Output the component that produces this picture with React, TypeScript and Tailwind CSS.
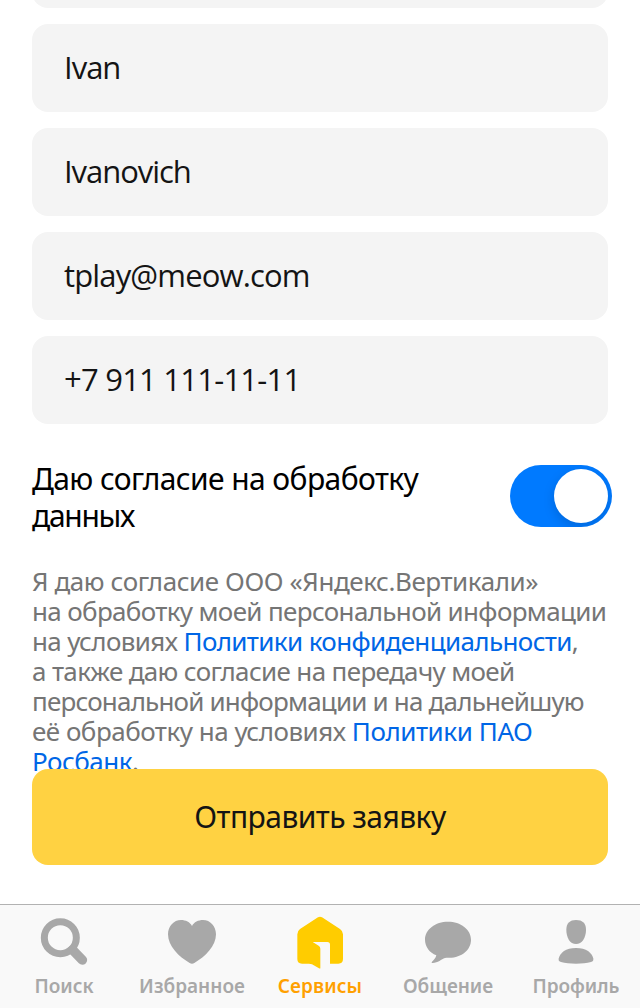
import type { ReactNode } from 'react';

const fields = [
  { value: 'Ivan', spacing: 'tracking-[-1px]' },
  { value: 'Ivanovich', spacing: 'tracking-[-1.05px]' },
  { value: 'tplay@meow.com', spacing: 'tracking-[-0.85px]' },
  { value: '+7 911 111-11-11', spacing: 'tracking-[-0.77px]' },
];

function SearchIcon() {
  return (
    <svg viewBox="0 0 180 180" className="size-[60px]" fill="none" stroke="currentColor">
      <circle cx="79" cy="83" r="48" strokeWidth="21" />
      <path d="M116 120 145 150" strokeWidth="29" strokeLinecap="round" />
    </svg>
  );
}

function HeartIcon() {
  return (
    <svg viewBox="0 0 180 180" className="size-[60px]" fill="currentColor">
      <path d="M90 48C84 36 71 30 57 30 35 30 18 49 18 73c0 35 32 67 65 86q7 4 14 0c33-19 65-51 65-86 0-24-17-43-39-43-14 0-27 6-33 18Z" />
    </svg>
  );
}

function HouseIcon() {
  return (
    <svg viewBox="0 0 180 180" className="size-[60px]" fill="#ffcc00">
      <path d="M84 22Q90 18 96 22L150 57Q159 63 159 73V147Q159 161 145 161H120V104Q120 96 112 96H68L86 107Q91 110 91 116V174Q91 177 87 175L66 163Q62 161 57 161H36Q22 161 22 147V73Q22 63 30 57Z" />
    </svg>
  );
}

function ChatIcon() {
  return (
    <svg viewBox="0 0 180 180" className="size-[60px]" fill="currentColor">
      <path d="M90 35c38 0 69 23 69 54s-29 55-67 54c-4 0-8 0-11 1-11 3-21 15-37 15-3 0-4-2-2-4 6-5 11-11 13-19C35 128 21 110 21 89c0-31 31-54 69-54Z" />
    </svg>
  );
}

function ProfileIcon() {
  return (
    <svg viewBox="0 0 180 180" className="size-[60px]" fill="currentColor">
      <path d="M90 30c20 0 30 10 30 29 0 24-12 43-30 43S61 83 61 59c0-19 10-29 29-29Z" />
      <path d="M90 114c31 0 48 14 52 32 1 6-2 8-7 10-12 4-28 5-45 5s-33-1-45-5c-5-2-8-4-7-10 4-18 21-32 52-32Z" />
    </svg>
  );
}

const tabs: { label: string; icon: ReactNode; color: string; spacing: string }[] = [
  { label: 'Поиск', icon: <SearchIcon />, color: 'text-[#a8a8a8]', spacing: 'tracking-normal' },
  { label: 'Избранное', icon: <HeartIcon />, color: 'text-[#a8a8a8]', spacing: 'tracking-normal' },
  { label: 'Сервисы', icon: <HouseIcon />, color: 'text-[#ffa000]', spacing: 'tracking-[0.1px]' },
  { label: 'Общение', icon: <ChatIcon />, color: 'text-[#a8a8a8]', spacing: 'tracking-[-0.05px]' },
  { label: 'Профиль', icon: <ProfileIcon />, color: 'text-[#a8a8a8]', spacing: 'tracking-[-0.1px]' },
];

export default function App() {
  return (
    <div className="flex h-[1008px] w-[640px] flex-col overflow-hidden bg-white font-['Noto_Sans',sans-serif]">
      <main className="flex flex-col px-8">
        <div className="h-2 shrink-0 overflow-hidden">
          <div className="-mt-20 h-[88px] rounded-2xl bg-[#f4f4f4]" />
        </div>
        <div className="mt-4 flex flex-col gap-4">
          {fields.map((f) => (
            <div
              key={f.value}
              className="flex h-[88px] items-center rounded-2xl bg-[#f4f4f4] pb-px pl-8 font-['Open_Sans',sans-serif] text-[31px] text-[#141414]"
            >
              <span className={f.spacing}>{f.value}</span>
            </div>
          ))}
        </div>

        <div className="mt-[35px] -mr-1 flex h-[74px] items-center justify-between">
          <p className="pt-0.5 text-[30px] leading-[37px] whitespace-nowrap text-black">
            <span className="block tracking-[-0.59px]">Даю согласие на обработку</span>
            <span className="block tracking-[-1.3px]">данных</span>
          </p>
          <button
            type="button"
            role="switch"
            aria-checked="true"
            className="flex h-[62px] w-[102px] items-center justify-end overflow-hidden rounded-full bg-[#007aff] pr-1"
          >
            <span className="size-[54px] rounded-full bg-white shadow-[0_4px_12px_rgba(0,0,0,0.15)]" />
          </button>
        </div>

        <p className="mt-[33px] h-[203px] text-[26px] leading-[30px] whitespace-nowrap text-[#757575]">
          <span className="block tracking-[-0.43px]">Я даю согласие ООО «Яндекс.Вертикали»</span>
          <span className="block tracking-[-0.65px]">на обработку моей персональной информации</span>
          <span className="block tracking-[-0.63px]">
            на условиях <a className="text-[#0066e6]">Политики конфиденциальности</a>,
          </span>
          <span className="block tracking-[-0.65px]">а также даю согласие на передачу моей</span>
          <span className="block tracking-[-0.81px]">персональной информации и на дальнейшую</span>
          <span className="block tracking-[-0.5px]">
            её обработку на условиях <a className="tracking-[-0.43px] text-[#0066e6]">Политики ПАО</a>
          </span>
          <span className="block tracking-[-0.5px]">
            <a className="text-[#0066e6]">Росбанк</a>.
          </span>
        </p>

        <button
          type="button"
          className="relative flex h-24 w-full shrink-0 items-center justify-center rounded-2xl bg-[#ffd242] pb-0.5 text-[30px] tracking-[-0.56px] text-[#141414]"
        >
          Отправить заявку
        </button>
      </main>

      <nav className="mt-auto grid h-[104px] shrink-0 grid-cols-5 border-t border-[#b2b2b2] bg-[#f9f9f9]">
        {tabs.map((t) => (
          <div key={t.label} className={`flex flex-col items-center pt-[5px] ${t.color}`}>
            {t.icon}
            <span className={`mt-1 text-[19px] leading-6 font-semibold ${t.spacing}`}>{t.label}</span>
          </div>
        ))}
      </nav>
    </div>
  );
}
